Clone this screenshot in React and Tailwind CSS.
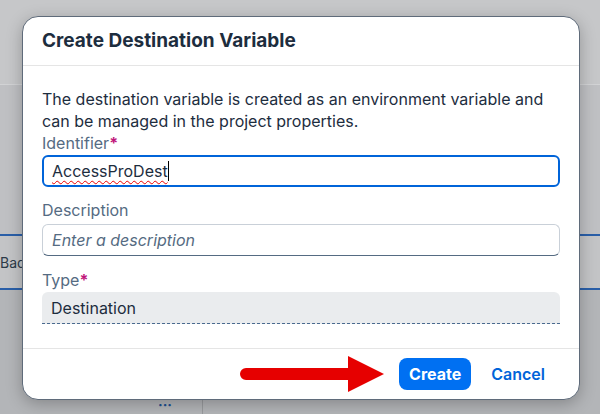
const font = { fontFamily: 'Inter, "Liberation Sans", sans-serif' };

const Label = ({ text, required }) => (
  <div className="text-[16px] leading-[22px] text-[#556b82]">
    {text}
    {required && <span className="text-[#c0157a] font-bold">*</span>}
  </div>
);

const App = () => {
  return (
    <div className="relative w-[600px] h-[414px] overflow-hidden bg-[#bdbec1]" style={font}>
      {/* dimmed page behind the dialog */}
      <div className="flex flex-col h-full">
        <div className="h-[85px] bg-[#c6c7c9] border-b border-[#d2d3d5]" />
        <div className="h-[149px] bg-[#bfc0c3]" />
        <div className="h-[56px] bg-[#c3c4c6] border-y-2 border-[#2a5fa8] flex items-center">
          <span className="text-[14px] text-[#2c3a48]">Bad</span>
        </div>
        <div className="flex-1 bg-[#b3b5b8] flex items-end">
          <div className="h-[14px] w-[203px] border-r border-[#999b9e] flex justify-end pr-[30px]">
            <span className="text-[#1d4f91] text-[14px] leading-[10px] font-bold">···</span>
          </div>
        </div>
      </div>

      {/* dialog */}
      <div className="absolute left-[22px] top-[16px] w-[558px] h-[384px] bg-white rounded-[16px] border border-[#5f6b7a] shadow-[0_4px_16px_rgba(0,0,0,0.25)] flex flex-col overflow-hidden">
        <div className="h-[49px] shrink-0 px-[19px] flex items-center border-b border-[#e5e5e5]">
          <h1 className="text-[19px] font-bold text-[#1d2d3e]">Create Destination Variable</h1>
        </div>

        <div className="flex-1 px-[19px] pt-[22px] text-[#1d2d3e]">
          <p className="text-[16px] leading-[22px]">
            The destination variable is created as an environment variable and can be managed in the project properties.
          </p>
          <Label text="Identifier" required />
          <div className="mt-[1px] h-[32px] rounded-[6px] border-2 border-[#0064d9] flex items-center px-[8px] text-[16px]">
            <span className="underline decoration-wavy decoration-[#e00] underline-offset-[3px] decoration-1">AccessProDest</span>
            <span className="w-px h-[20px] bg-black" />
          </div>

          <div className="mt-[12px]">
            <Label text="Description" />
          </div>
          <div className="mt-[3px] h-[32px] rounded-[6px] border border-[#c9d0d8] border-b-[#556b82] flex items-center px-[9px] text-[16px] italic text-[#556b82]">
            Enter a description
          </div>

          <div className="mt-[13px]">
            <Label text="Type" required />
          </div>
          <div className="mt-[1px] h-[32px] rounded-t-[6px] bg-[#eaecee] border-b border-dashed border-[#4a6a8f] flex items-center px-[9px] text-[16px]">
            Destination
          </div>
        </div>

        <div className="h-[51px] shrink-0 border-t border-[#e5e5e5] flex items-center justify-end gap-[10px] pr-[24px]">
          <button type="button" className="h-[32px] px-[10px] rounded-[8px] bg-[#0070f2] text-white text-[16px] font-bold">
            Create
          </button>
          <button type="button" className="h-[32px] px-[10px] text-[#0064d9] text-[16px] font-semibold">
            Cancel
          </button>
        </div>
      </div>

      {/* callout arrow */}
      <svg className="absolute left-[238px] top-[354px]" width="148" height="40" viewBox="0 0 148 40">
        <path d="M8 14 H110 V2 L146 20 L110 38 V26 H8 A6 6 0 0 1 8 14 Z" fill="#e60000" />
      </svg>
    </div>
  );
};

export default App;
